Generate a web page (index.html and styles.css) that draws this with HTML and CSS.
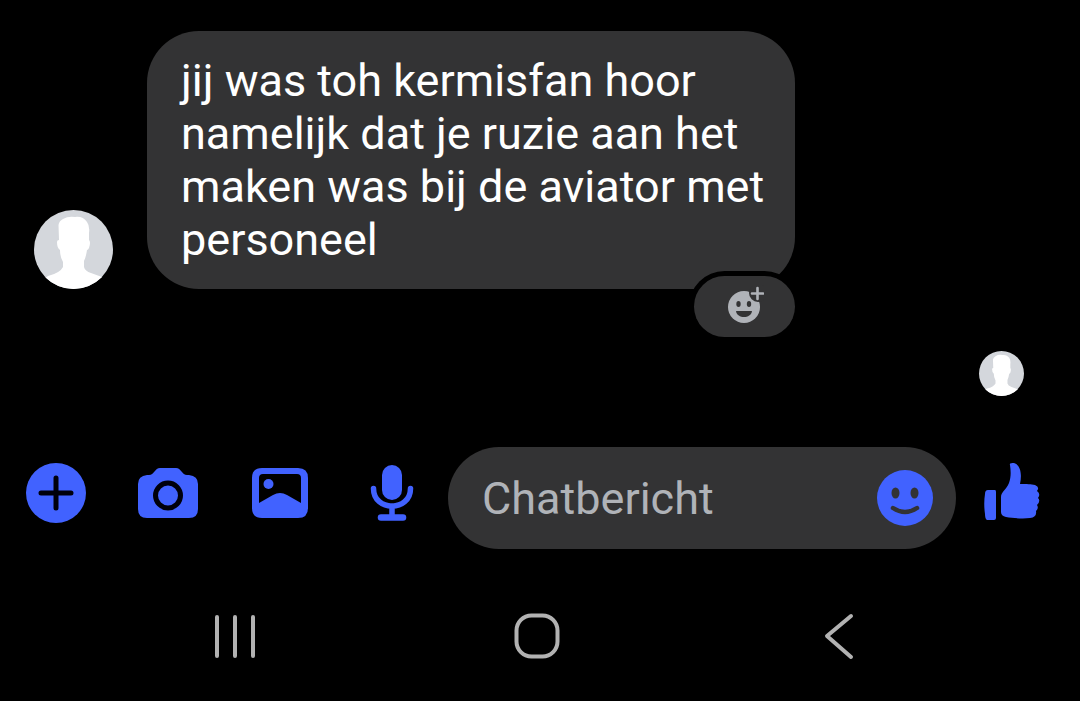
FILE: index.html
```html
<!DOCTYPE html>
<html lang="nl">
<head>
<meta charset="utf-8">
<meta name="viewport" content="width=device-width, initial-scale=1">
<title>Chat</title>
<link rel="stylesheet" href="styles.css">
</head>
<body>
<svg class="defs" aria-hidden="true">
  <symbol id="person" viewBox="0 0 79 79">
    <rect width="79" height="79" fill="#d4d7dc"/>
    <path fill="#fff" d="M25 30L24.500 15Q25 11 29 9Q34 6 41 7Q49 6 53 12Q56 16 55 23V30Q57 32 55 38Q54 40 53 40Q52 47 50 51V57Q51 61 57 63L68 67L79 76V79H0V76L14 66Q26 63 29 57V52Q26 47 26 40Q23 38 23 32Q23 30 25 30Z"/>
  </symbol>
</svg>
<main class="chat">
  <div class="message">
    <svg class="avatar" role="img" aria-label="Profielfoto"><use href="#person"/></svg>
    <div class="bubble">
      <p class="text">jij was toh kermisfan hoor namelijk dat je ruzie aan het maken was bij de aviator met personeel</p>
      <button class="react" type="button" aria-label="Reageren">
        <svg width="38" height="40" viewBox="0 0 38 40">
          <circle cx="18" cy="22" r="16" fill="#b0b3b8"/>
          <circle cx="32" cy="8" r="9" fill="#333334"/>
          <path d="M31.500 3V14M26 8.500H37" stroke="#b0b3b8" stroke-width="2.600" stroke-linecap="round"/>
          <ellipse cx="12.500" cy="19" rx="2.200" ry="3" fill="#333334"/>
          <ellipse cx="23" cy="19" rx="2.200" ry="3" fill="#333334"/>
          <path d="M10 26H26C25 34 11 34 10 26Z" fill="#333334"/>
        </svg>
      </button>
    </div>
  </div>
  <svg class="seen" role="img" aria-label="Gezien"><use href="#person"/></svg>
</main>
<form class="composer">
  <div class="tools">
    <button class="tool" type="button" aria-label="Meer">
      <svg viewBox="0 0 60 60"><circle cx="30" cy="30" r="30" fill="currentColor"/><path d="M30 15V45M15 30H45" stroke="#00000c" stroke-width="5" stroke-linecap="round"/></svg>
    </button>
    <button class="tool" type="button" aria-label="Camera">
      <svg viewBox="0 0 60 60"><path fill="currentColor" d="M9 12H11C16 12 17 5 22 5H38C43 5 44 12 49 12H51Q60 13 60 21V46Q60 55 51 55H9Q0 55 0 46V21Q0 13 9 12Z"/><circle cx="30" cy="32.500" r="12.500" fill="none" stroke="#00000c" stroke-width="5"/></svg>
    </button>
    <button class="tool" type="button" aria-label="Galerij">
      <svg viewBox="0 0 60 60"><path fill="currentColor" fill-rule="evenodd" d="M12 5H48Q58 5 58 15V45Q58 55 48 55H12Q2 55 2 45V15Q2 5 12 5ZM13 11Q9 11 9 15V40L23 32Q30 28 37 32L51 40V15Q51 11 47 11Z"/><circle cx="18.500" cy="21" r="5" fill="currentColor"/></svg>
    </button>
    <button class="tool" type="button" aria-label="Spraakbericht">
      <svg viewBox="0 0 60 60"><rect x="20" y="2" width="20" height="35" rx="10" fill="currentColor"/><path d="M11.500 25.500C11.500 49 48.500 49 48.500 25.500M30 43V54" fill="none" stroke="currentColor" stroke-width="5.500" stroke-linecap="round"/><path d="M19 54.500H41" stroke="currentColor" stroke-width="6.500" stroke-linecap="round"/></svg>
    </button>
  </div>
  <div class="field">
    <input class="input" type="text" placeholder="Chatbericht" aria-label="Chatbericht">
    <button class="smile" type="button" aria-label="Emoji">
      <svg viewBox="0 0 56 56"><circle cx="28" cy="28" r="28" fill="currentColor"/><ellipse cx="18.500" cy="23" rx="4" ry="5.500" fill="#333334"/><ellipse cx="37.500" cy="23" rx="4" ry="5.500" fill="#333334"/><path d="M16 38Q28 46 40 38" fill="none" stroke="#333334" stroke-width="4.500" stroke-linecap="round"/></svg>
    </button>
  </div>
  <button class="tool" type="button" aria-label="Vind ik leuk">
    <svg viewBox="0 0 60 60"><path fill="currentColor" d="M6 27H13Q14 27 14 29V55Q14 57 12 57H5Q3 56 3 51C2 44 2 37 3 31Q3 27 6 27ZM28 2C27 0 30 0 32 0C39 2 40 12 38 21C45 21 49 21 53 22Q58 24 55 28Q59 31 56 35Q59 38 55 42Q57 45 54 48Q55 54 48 55C40 56 31 55 24 54Q19 53 19 49V34C19 29 24 27 27 20C29 14 29 9 28 2Z"/></svg>
  </button>
</form>
<nav class="system" aria-label="Systeemnavigatie">
  <button class="key" type="button" aria-label="Recente apps"><svg viewBox="0 0 48 48"><path d="M6 5V44M24 5V44M42 5V44"/></svg></button>
  <button class="key" type="button" aria-label="Start"><svg viewBox="0 0 48 48"><rect x="3.500" y="3.500" width="41" height="41" rx="15"/></svg></button>
  <button class="key" type="button" aria-label="Terug"><svg viewBox="0 0 48 48"><path d="M36 4L12 24L36 45"/></svg></button>
</nav>
</body>
</html>
```
FILE: styles.css
```css
* {
  box-sizing: border-box;
}

body {
  margin: 0;
  min-height: 100vh;
  display: flex;
  flex-direction: column;
  background: #000;
  color: #fff;
  font-family: Roboto, "Liberation Sans", sans-serif;
  font-size: 45px;
  line-height: 53px;
}

button {
  padding: 0;
  border: 0;
  background: none;
  color: inherit;
}

svg {
  display: block;
}

.defs {
  position: absolute;
  width: 0;
  height: 0;
}

.chat {
  display: flex;
  flex-direction: column;
  padding: 31px 56px 51px 34px;
}

.message {
  display: flex;
  align-items: flex-end;
  gap: 34px;
}

.avatar {
  flex: none;
  width: 79px;
  height: 79px;
  border-radius: 50%;
}

.bubble {
  position: relative;
  max-width: 648px;
  padding: 23px 28px 23px 34px;
  border-radius: 52px;
  background: #333334;
}

.text {
  margin: 0;
}

.react {
  position: absolute;
  right: 0;
  bottom: -48px;
  display: flex;
  align-items: center;
  justify-content: center;
  width: 101px;
  height: 61px;
  padding-bottom: 4px;
  border-radius: 31px;
  background: #333334;
  box-shadow: 0 0 0 5px #000;
}

.seen {
  align-self: flex-end;
  width: 45px;
  height: 45px;
  margin-top: 62px;
  border-radius: 50%;
}

.composer {
  display: flex;
  align-items: center;
  gap: 26px;
  padding: 0 38px 0 26px;
}

.tools {
  display: flex;
  gap: 52px;
}

.tool {
  flex: none;
  width: 60px;
  height: 70px;
  padding-bottom: 10px;
  color: #4162ff;
}

.field {
  display: flex;
  flex: 1;
  align-items: center;
  min-width: 0;
  height: 102px;
  padding: 0 23px 0 34px;
  border-radius: 51px;
  background: #333334;
}

.input {
  flex: 1;
  min-width: 0;
  padding: 0;
  border: 0;
  outline: 0;
  background: none;
  color: #fff;
  font: inherit;
}

.input::placeholder {
  color: #b0b3b8;
  opacity: 1;
}

.smile {
  flex: none;
  width: 56px;
  height: 56px;
  color: #4162ff;
}

.system {
  display: flex;
  align-items: center;
  height: 130px;
  margin-top: auto;
  padding: 0 90px 0 84px;
}

.key {
  display: flex;
  flex: 1;
  justify-content: center;
}

.key svg {
  width: 48px;
  height: 48px;
  fill: none;
  stroke: #b2b2b2;
  stroke-width: 4;
  stroke-linecap: round;
  stroke-linejoin: round;
}
```
